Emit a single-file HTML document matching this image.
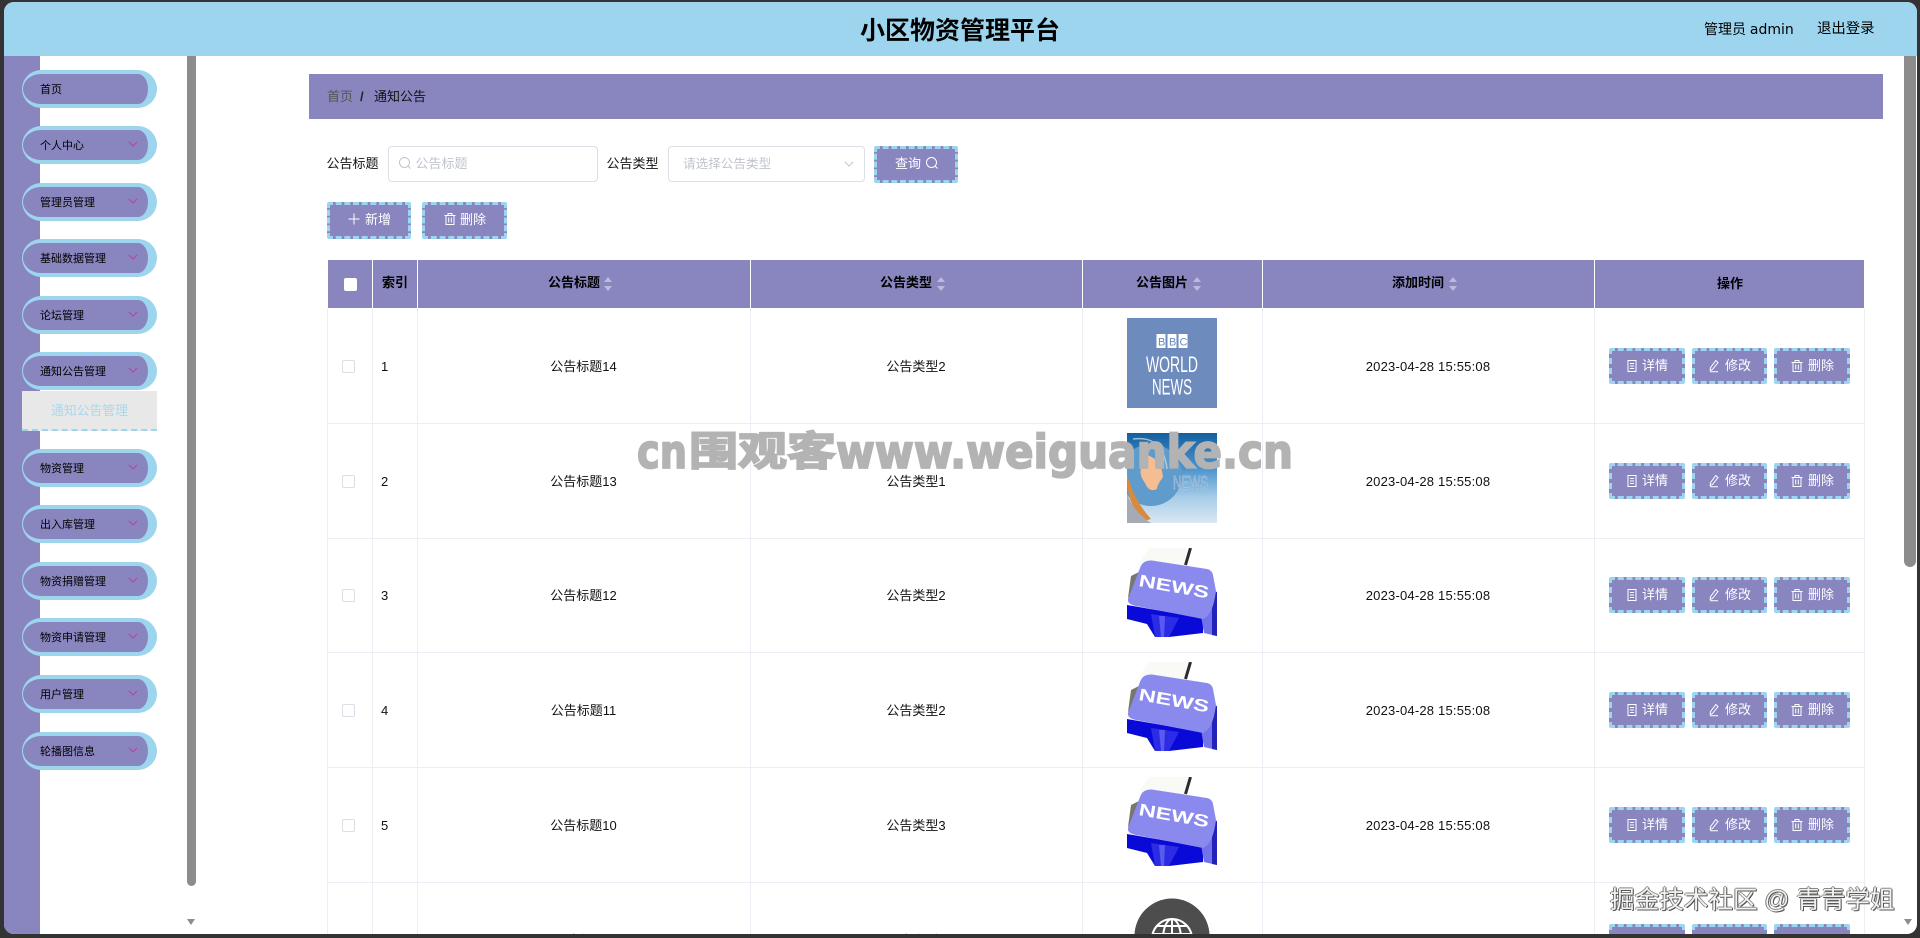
<!DOCTYPE html>
<html lang="zh">
<head>
<meta charset="utf-8">
<title>小区物资管理平台</title>
<style>
*{margin:0;padding:0;box-sizing:border-box}
html,body{width:1920px;height:938px;overflow:hidden;background:#333}
body{font-family:"Liberation Sans","Noto Sans CJK SC",sans-serif;color:#111;font-size:13px}
#win{position:absolute;left:4px;top:2px;width:1913px;height:932px;background:#fff;border-radius:10px;overflow:hidden}
#in{position:absolute;left:-4px;top:-2px;width:1920px;height:936px;overflow:hidden}
.a{position:absolute}
#hd{position:absolute;left:0;top:0;width:1920px;height:56px;background:#9dd5ee}
#ttl{position:absolute;left:660px;width:600px;top:14px;text-align:center;font-size:25px;line-height:34px;font-weight:700;color:#000}
.side{position:absolute;left:4px;top:56px;width:36px;height:880px;background:#8985bf}
.m{position:absolute;left:22px;width:135px;height:38px;background:#8985bf;border:solid #9dd5ee;border-width:4px 9px 4px 1px;border-radius:20px;font-size:11px;line-height:32px;padding-left:17px;color:#000}
.m svg{position:absolute;left:105px;top:11px}
.sb{position:absolute;background:#8c8c8c;border-radius:0 0 6px 6px}
.tri{position:absolute;width:0;height:0;border-left:4.5px solid transparent;border-right:4.5px solid transparent;border-top:6px solid #8c8c8c}
.l{position:absolute;font-size:13px;line-height:20px;white-space:nowrap}
.in{position:absolute;top:146px;height:36px;background:#fff;border:1px solid #dcdfe6;border-radius:4px}
.ph{position:absolute;top:154px;font-size:13px;line-height:20px;color:#c0c4cc;white-space:nowrap}
.b{position:absolute;box-sizing:border-box;height:37px;background:#8985bf;border:3px dashed #9dd5ee;border-radius:2px}
.bt{position:absolute;color:#fff;font-size:13px;line-height:20px;white-space:nowrap}
.ic{position:absolute}
#th{position:absolute;left:328px;top:260px;width:1536px;height:48px;background:#8985bf}
.vh{position:absolute;top:260px;width:1px;height:48px;background:#fff}
.v{position:absolute;top:308px;width:1px;height:628px;background:#ebeef5}
.h{position:absolute;left:327px;width:1537px;height:1px;background:#ebeef5}
.tht{position:absolute;top:273px;font-size:13px;font-weight:700;line-height:20px;color:#000;white-space:nowrap}
.su{position:absolute;width:0;height:0;border-left:4px solid transparent;border-right:4px solid transparent;border-bottom:5px solid #bdbbdc;top:277px}
.sd{position:absolute;width:0;height:0;border-left:4px solid transparent;border-right:4px solid transparent;border-top:5px solid #bdbbdc;top:286px}
.r{position:absolute;left:0;width:1920px;height:115px}
.t{position:absolute;top:48.5px;line-height:20px;font-size:13px;text-align:center;white-space:nowrap;color:#111}
.ck{position:absolute;left:342px;top:52px;width:13px;height:13px;border:1px solid #dcdfe6;border-radius:2px;background:#fff}
.bb{position:absolute;top:40px;height:36px;box-sizing:border-box;background:#8985bf;border:3px dashed #9dd5ee;border-radius:2px}
.img{position:absolute;left:1127px;top:10px;width:90px;height:90px;display:block}
.mk{position:absolute;left:1610px;top:885px;width:290px;height:32px;font-size:24.6px;line-height:32px;white-space:nowrap;color:#f2f2f2;text-shadow:1px 1px 0 #555,-1px 0 0 #777,0 -1px 0 #888,1px 0 0 #666}
</style>
</head>
<body>
<svg width="0" height="0" style="position:absolute">
<symbol id="doc" viewBox="0 0 14 14"><path d="M3 1.5H11V12.5H3ZM5 4.5H9M5 7H9M5 9.5H9" fill="none" stroke="#fff" stroke-width="1"/></symbol>
<symbol id="pen" viewBox="0 0 14 14"><path d="M8.8 1.5L11 3.5L5.5 10.5L3.2 11.5L3.4 8.8ZM3 12.8H11" fill="none" stroke="#fff" stroke-width="1"/></symbol>
<symbol id="bin" viewBox="0 0 14 14"><path d="M1.5 3.5H12.5M5 3.5V1.5H9V3.5M3 3.5V12.5H11V3.5M5.7 5.5V10.5M8.3 5.5V10.5" fill="none" stroke="#fff" stroke-width="1"/></symbol>
<symbol id="mag" viewBox="0 0 14 14"><circle cx="6.5" cy="6.5" r="5" fill="none" stroke="currentColor" stroke-width="1"/><path d="M10 10L12.5 12.5" stroke="currentColor" stroke-width="1"/></symbol>
<symbol id="chev" viewBox="0 0 10 6"><path d="M.8.8L5 5L9.2.8" fill="none" stroke="#b8419f" stroke-width="1"/></symbol>
<symbol id="key" viewBox="0 0 90 90">
<rect width="90" height="90" fill="#fff"/>
<path d="M3 28L22 0H65L58 18L14 14Z" fill="#f9f9f6"/>
<path d="M4 28L12 24L8 42L1 50Z" fill="#77776f"/>
<path d="M63.500 0L58.500 17" stroke="#2b2b2b" stroke-width="3"/>
<path d="M0 57L76 70V85L42 89H28L20 76L0 71Z" fill="#0a0ad8"/>
<path d="M28 89L24 66L52 70L42 89Z" fill="#2c2ce4"/>
<path d="M34 89L32 68L38 68L37 89Z" fill="#5a5af0"/>
<path d="M74 68L88 43L90 44V88L77 85Z" fill="#7272ea"/>
<path d="M85 46L90 44V88L85 87Z" fill="#2222b8"/>
<path d="M20 13Q24 12 28 13L80 21Q85 22 86 27L89 43Q86 67 76 71L9 58Q0 56 1 51L13 20Q15 14 20 13Z" fill="#8a8aee"/>
<text x="11" y="38" transform="rotate(10 11 38)" font-family="Liberation Sans" font-weight="700" font-size="17" fill="#fff" textLength="71" lengthAdjust="spacingAndGlyphs">NEWS</text>
</symbol>
</svg>
<div id="win"><div id="in">

<div class="side"></div>
<div class="sb" style="left:187px;top:56px;width:9px;height:830px"></div>
<div class="tri" style="left:187px;top:919px"></div>
<div class="sb" style="left:1904px;top:56px;width:12px;height:511px"></div>
<div class="tri" style="left:1904px;top:919px"></div>

<div class="m" style="top:70px">首页</div>
<div class="m" style="top:126px">个人中心<svg width="10" height="6"><use href="#chev"/></svg></div>
<div class="m" style="top:183px">管理员管理<svg width="10" height="6"><use href="#chev"/></svg></div>
<div class="m" style="top:239px">基础数据管理<svg width="10" height="6"><use href="#chev"/></svg></div>
<div class="m" style="top:296px">论坛管理<svg width="10" height="6"><use href="#chev"/></svg></div>
<div class="m" style="top:352px">通知公告管理<svg width="10" height="6"><use href="#chev"/></svg></div>
<div class="a" style="left:22px;top:391px;width:135px;height:40px;background:#e8e8e8;border-bottom:2.5px dashed #9dd5ee;text-align:center;color:#a8d8ee;font-size:12.8px;line-height:40px">通知公告管理</div>
<div class="m" style="top:449px">物资管理<svg width="10" height="6"><use href="#chev"/></svg></div>
<div class="m" style="top:505px">出入库管理<svg width="10" height="6"><use href="#chev"/></svg></div>
<div class="m" style="top:562px">物资捐赠管理<svg width="10" height="6"><use href="#chev"/></svg></div>
<div class="m" style="top:618px">物资申请管理<svg width="10" height="6"><use href="#chev"/></svg></div>
<div class="m" style="top:675px">用户管理<svg width="10" height="6"><use href="#chev"/></svg></div>
<div class="m" style="top:732px">轮播图信息<svg width="10" height="6"><use href="#chev"/></svg></div>

<div class="a" style="left:309px;top:74px;width:1574px;height:45px;background:#8985bf"></div>
<div class="l" style="left:327px;top:86.500px;color:#555">首页</div>
<div class="l" style="left:360px;top:86.500px;font-weight:700;color:#222">/</div>
<div class="l" style="left:374px;top:86.500px;color:#111">通知公告</div>

<div class="l" style="left:326.500px;top:154px">公告标题</div>
<div class="in" style="left:388px;width:210px"></div>
<svg class="ic" style="left:398px;top:156px;color:#c0c4cc" width="14" height="14"><use href="#mag"/></svg>
<div class="ph" style="left:415.500px">公告标题</div>
<div class="l" style="left:606.500px;top:154px">公告类型</div>
<div class="in" style="left:668px;width:197px"></div>
<div class="ph" style="left:683px;font-size:12.6px">请选择公告类型</div>
<svg class="ic" style="left:844px;top:161px" width="10" height="6"><path d="M.8.8L5 5L9.2.8" fill="none" stroke="#c0c4cc" stroke-width="1"/></svg>
<div class="b" style="left:874px;top:146px;width:84px"></div>
<div class="bt" style="left:895px;top:154px">查询</div>
<svg class="ic" style="left:925px;top:156px;color:#fff" width="14" height="14"><use href="#mag"/></svg>

<div class="b" style="left:327px;top:202px;width:84px"></div>
<svg class="ic" style="left:348px;top:213px" width="12" height="12"><path d="M6 .5V11.5M.5 6H11.5" stroke="#fff" stroke-width="1"/></svg>
<div class="bt" style="left:365px;top:210px">新增</div>
<div class="b" style="left:422px;top:202px;width:85px"></div>
<svg class="ic" style="left:443px;top:212px" width="14" height="14"><use href="#bin"/></svg>
<div class="bt" style="left:460px;top:210px">删除</div>

<div id="th"></div>
<div class="vh" style="left:372px"></div>
<div class="vh" style="left:417px"></div>
<div class="vh" style="left:750px"></div>
<div class="vh" style="left:1082px"></div>
<div class="vh" style="left:1262px"></div>
<div class="vh" style="left:1594px"></div>
<div class="a" style="left:344px;top:278px;width:13px;height:13px;background:#fff;border-radius:2px"></div>
<div class="tht" style="left:382px">索引</div>
<div class="tht" style="left:548px">公告标题</div><div class="su" style="left:604px"></div><div class="sd" style="left:604px"></div>
<div class="tht" style="left:880px">公告类型</div><div class="su" style="left:937px"></div><div class="sd" style="left:937px"></div>
<div class="tht" style="left:1136px">公告图片</div><div class="su" style="left:1193px"></div><div class="sd" style="left:1193px"></div>
<div class="tht" style="left:1392px">添加时间</div><div class="su" style="left:1449px"></div><div class="sd" style="left:1449px"></div>
<div class="tht" style="left:1717px;top:274px">操作</div>

<div class="v" style="left:327px"></div>
<div class="v" style="left:372px"></div>
<div class="v" style="left:417px"></div>
<div class="v" style="left:750px"></div>
<div class="v" style="left:1082px"></div>
<div class="v" style="left:1262px"></div>
<div class="v" style="left:1594px"></div>
<div class="v" style="left:1864px"></div>
<div class="h" style="top:423px"></div>
<div class="h" style="top:538px"></div>
<div class="h" style="top:652px"></div>
<div class="h" style="top:767px"></div>
<div class="h" style="top:882px"></div>

<!-- row 1 -->
<div class="r" style="top:308px">
<div class="ck"></div><div class="t" style="left:381px">1</div>
<div class="t" style="left:417px;width:333px">公告标题14</div><div class="t" style="left:750px;width:332px">公告类型2</div>
<svg class="img" viewBox="0 0 90 90"><rect width="90" height="90" fill="#6d8bbd"/><rect x="29.500" y="16" width="9" height="14" fill="#fff"/><rect x="40.500" y="16" width="9" height="14" fill="#fff"/><rect x="51.500" y="16" width="9" height="14" fill="#fff"/><text x="31" y="27.500" font-family="Liberation Sans" font-size="11" fill="#6d8bbd">B</text><text x="42" y="27.500" font-family="Liberation Sans" font-size="11" fill="#6d8bbd">B</text><text x="52.500" y="27.500" font-family="Liberation Sans" font-size="11" fill="#6d8bbd">C</text><text x="19" y="54" font-family="Liberation Sans" font-size="22" fill="#fff" textLength="52" lengthAdjust="spacingAndGlyphs">WORLD</text><text x="25" y="76.500" font-family="Liberation Sans" font-size="22" fill="#fff" textLength="40" lengthAdjust="spacingAndGlyphs">NEWS</text></svg>
<div class="t" style="left:1262px;width:332px;letter-spacing:.2px">2023-04-28 15:55:08</div>
<div class="bb" style="left:1609px;width:76px"></div><svg class="ic" style="left:1625px;top:51px" width="14" height="14"><use href="#doc"/></svg><div class="bt" style="left:1642px;top:48px">详情</div>
<div class="bb" style="left:1692px;width:75px"></div><svg class="ic" style="left:1707px;top:51px" width="14" height="14"><use href="#pen"/></svg><div class="bt" style="left:1725px;top:48px">修改</div>
<div class="bb" style="left:1774px;width:76px"></div><svg class="ic" style="left:1790px;top:51px" width="14" height="14"><use href="#bin"/></svg><div class="bt" style="left:1808px;top:48px">删除</div>
</div>
<!-- row 2 -->
<div class="r" style="top:423px">
<div class="ck"></div><div class="t" style="left:381px">2</div>
<div class="t" style="left:417px;width:333px">公告标题13</div><div class="t" style="left:750px;width:332px">公告类型1</div>
<svg class="img" viewBox="0 0 90 90"><defs><linearGradient id="g2" x1="0" y1="0" x2="0" y2="1"><stop offset="0" stop-color="#14609f"/><stop offset=".4" stop-color="#4b95cf"/><stop offset=".72" stop-color="#a9cde8"/><stop offset="1" stop-color="#d9e8f4"/></linearGradient></defs><rect width="90" height="90" fill="url(#g2)"/><circle cx="24" cy="42" r="31" fill="#5f9ccb"/><path d="M20 22Q34 26 36 44Q30 52 30 56Q22 60 18 50Q12 42 14 36Q16 28 20 22Z" fill="#f6bd92"/><path d="M0 40Q6 66 24 86L17 88Q0 72 0 44Z" fill="#d98a3c"/><path d="M0 62Q8 80 24 90H0Z" fill="#a4abb2"/><path d="M6 6Q36 2 40 36" fill="none" stroke="#cfe2f0" stroke-width="1.500" opacity=".7"/><text x="46" y="56" font-family="Liberation Sans" font-size="18" fill="#7ba3c9" stroke="#c7dcee" stroke-width=".4" textLength="35" lengthAdjust="spacingAndGlyphs">NEWS</text></svg>
<div class="t" style="left:1262px;width:332px;letter-spacing:.2px">2023-04-28 15:55:08</div>
<div class="bb" style="left:1609px;width:76px"></div><svg class="ic" style="left:1625px;top:51px" width="14" height="14"><use href="#doc"/></svg><div class="bt" style="left:1642px;top:48px">详情</div>
<div class="bb" style="left:1692px;width:75px"></div><svg class="ic" style="left:1707px;top:51px" width="14" height="14"><use href="#pen"/></svg><div class="bt" style="left:1725px;top:48px">修改</div>
<div class="bb" style="left:1774px;width:76px"></div><svg class="ic" style="left:1790px;top:51px" width="14" height="14"><use href="#bin"/></svg><div class="bt" style="left:1808px;top:48px">删除</div>
</div>
<!-- row 3 -->
<div class="r" style="top:538px">
<div class="ck" style="top:51px"></div><div class="t" style="left:381px;top:47.500px">3</div>
<div class="t" style="left:417px;width:333px;top:47.500px">公告标题12</div><div class="t" style="left:750px;width:332px;top:47.500px">公告类型2</div>
<svg class="img"><use href="#key"/></svg>
<div class="t" style="left:1262px;width:332px;top:47.500px;letter-spacing:.2px">2023-04-28 15:55:08</div>
<div class="bb" style="left:1609px;width:76px;top:39px"></div><svg class="ic" style="left:1625px;top:50px" width="14" height="14"><use href="#doc"/></svg><div class="bt" style="left:1642px;top:47px">详情</div>
<div class="bb" style="left:1692px;width:75px;top:39px"></div><svg class="ic" style="left:1707px;top:50px" width="14" height="14"><use href="#pen"/></svg><div class="bt" style="left:1725px;top:47px">修改</div>
<div class="bb" style="left:1774px;width:76px;top:39px"></div><svg class="ic" style="left:1790px;top:50px" width="14" height="14"><use href="#bin"/></svg><div class="bt" style="left:1808px;top:47px">删除</div>
</div>
<!-- row 4 -->
<div class="r" style="top:652px">
<div class="ck"></div><div class="t" style="left:381px">4</div>
<div class="t" style="left:417px;width:333px">公告标题11</div><div class="t" style="left:750px;width:332px">公告类型2</div>
<svg class="img"><use href="#key"/></svg>
<div class="t" style="left:1262px;width:332px;letter-spacing:.2px">2023-04-28 15:55:08</div>
<div class="bb" style="left:1609px;width:76px"></div><svg class="ic" style="left:1625px;top:51px" width="14" height="14"><use href="#doc"/></svg><div class="bt" style="left:1642px;top:48px">详情</div>
<div class="bb" style="left:1692px;width:75px"></div><svg class="ic" style="left:1707px;top:51px" width="14" height="14"><use href="#pen"/></svg><div class="bt" style="left:1725px;top:48px">修改</div>
<div class="bb" style="left:1774px;width:76px"></div><svg class="ic" style="left:1790px;top:51px" width="14" height="14"><use href="#bin"/></svg><div class="bt" style="left:1808px;top:48px">删除</div>
</div>
<!-- row 5 -->
<div class="r" style="top:767px">
<div class="ck"></div><div class="t" style="left:381px">5</div>
<div class="t" style="left:417px;width:333px">公告标题10</div><div class="t" style="left:750px;width:332px">公告类型3</div>
<svg class="img"><use href="#key"/></svg>
<div class="t" style="left:1262px;width:332px;letter-spacing:.2px">2023-04-28 15:55:08</div>
<div class="bb" style="left:1609px;width:76px"></div><svg class="ic" style="left:1625px;top:51px" width="14" height="14"><use href="#doc"/></svg><div class="bt" style="left:1642px;top:48px">详情</div>
<div class="bb" style="left:1692px;width:75px"></div><svg class="ic" style="left:1707px;top:51px" width="14" height="14"><use href="#pen"/></svg><div class="bt" style="left:1725px;top:48px">修改</div>
<div class="bb" style="left:1774px;width:76px"></div><svg class="ic" style="left:1790px;top:51px" width="14" height="14"><use href="#bin"/></svg><div class="bt" style="left:1808px;top:48px">删除</div>
</div>
<!-- row 6, cut off by the window edge -->
<div class="r" style="top:882px;height:52px;overflow:hidden">
<div class="t" style="left:417px;width:333px">公告标题9</div><div class="t" style="left:750px;width:332px">公告类型2</div>
<svg class="img" viewBox="0 0 90 90"><circle cx="45" cy="44" r="37.500" fill="#4d4d4d"/><circle cx="45" cy="47" r="20" fill="none" stroke="#fff" stroke-width="2"/><ellipse cx="45" cy="47" rx="9" ry="20" fill="none" stroke="#fff" stroke-width="2"/><path d="M45 27V67M30 34H60M25 42H65" stroke="#fff" stroke-width="2"/></svg>
<div class="t" style="left:1262px;width:332px;letter-spacing:.2px">2023-04-28 15:55:08</div>
<div class="bb" style="left:1609px;width:76px;top:42px"></div>
<div class="bb" style="left:1692px;width:75px;top:42px"></div>
<div class="bb" style="left:1774px;width:76px;top:42px"></div>
</div>

<div id="hd"></div>
<div id="ttl">小区物资管理平台</div>
<div class="a" style="left:1704px;top:19px;font-size:14px;line-height:20px;color:#000;white-space:nowrap">管理员 <span style="font-family:'DejaVu Sans',sans-serif;font-size:14px">admin</span></div>
<div class="a" style="left:1817px;top:19px;font-size:14.4px;line-height:20px;color:#000;white-space:nowrap">退出登录</div>

</div></div>

<svg class="a" style="left:0;top:0" width="1920" height="938" fill="#b3b3b3" stroke="#b3b3b3" stroke-width="1.800">
<text x="637" y="468" font-family="DejaVu Sans" font-weight="700" font-size="46" textLength="50" lengthAdjust="spacingAndGlyphs">cn</text>
<text x="689" y="465" font-family="Noto Sans CJK SC" font-weight="700" font-size="40" textLength="147" lengthAdjust="spacingAndGlyphs">围观客</text>
<text x="836" y="468" font-family="DejaVu Sans" font-weight="700" font-size="46" textLength="457" lengthAdjust="spacingAndGlyphs">www.weiguanke.cn</text>
</svg>
<div class="mk">掘金技术社区 @ 青青学姐</div>
</body>
</html>
